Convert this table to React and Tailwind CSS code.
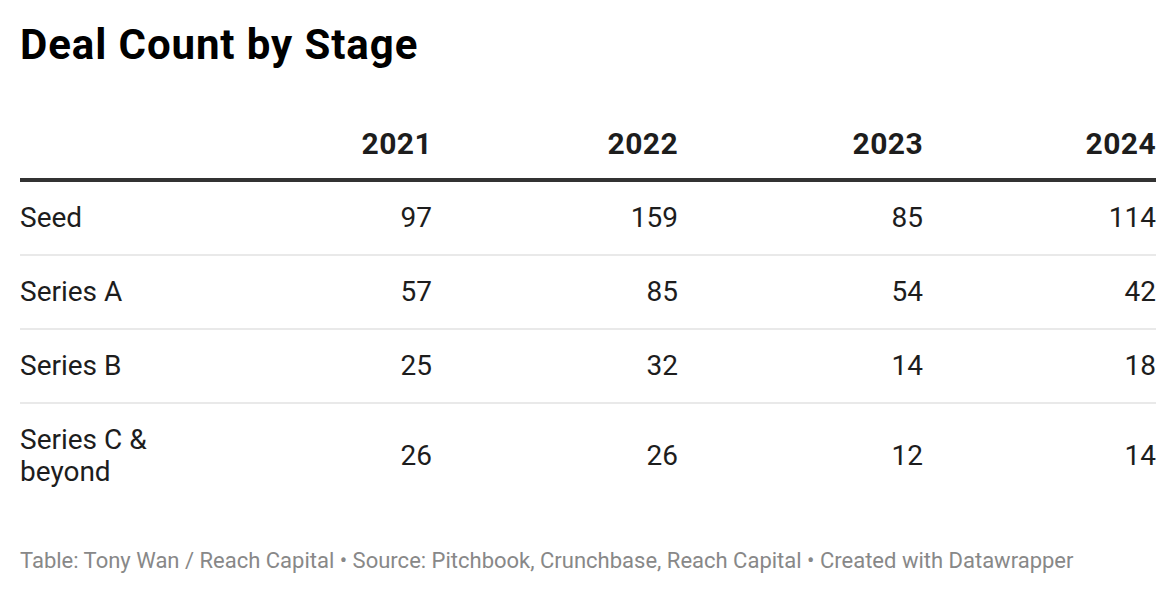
const years = ['2021', '2022', '2023', '2024']

const rows = [
  { stage: 'Seed', values: [97, 159, 85, 114] },
  { stage: 'Series A', values: [57, 85, 54, 42] },
  { stage: 'Series B', values: [25, 32, 14, 18] },
  { stage: 'Series C & beyond', values: [26, 26, 12, 14] },
]

const cols = 'grid grid-cols-[167px_245px_246px_245px_233px]'

export default function App() {
  return (
    <div className="min-h-[594px] w-[1176px] bg-white px-5 pt-[21px] font-['Roboto',sans-serif] text-[#1d1d1d]">
      <h1 className="text-[42px] font-bold leading-[48px] tracking-[0.9px] text-black">Deal Count by Stage</h1>

      {/* Table */}
      <div className="mt-[59px]">
        <div className={`${cols} border-b-4 border-[#333] pb-[18px]`}>
          <div />
          {years.map((y) => (
            <div key={y} className="text-right text-[30px] font-bold leading-[32px] tracking-[0.4px]">
              {y}
            </div>
          ))}
        </div>

        {rows.map((row, i) => (
          <div
            key={row.stage}
            className={`${cols} items-center py-5 ${i < rows.length - 1 ? 'border-b-2 border-[#e9e9e9]' : ''}`}
          >
            <div className="text-[28px] leading-[32px]">{row.stage}</div>
            {row.values.map((v, j) => (
              <div key={j} className="text-right text-[28px] leading-[32px]">
                {v}
              </div>
            ))}
          </div>
        ))}
      </div>

      <p className="mt-[40px] text-[22px] leading-[26px] text-[#888]">
        Table: Tony Wan / Reach Capital • Source: Pitchbook, Crunchbase, Reach Capital • Created with Datawrapper
      </p>
    </div>
  )
}
